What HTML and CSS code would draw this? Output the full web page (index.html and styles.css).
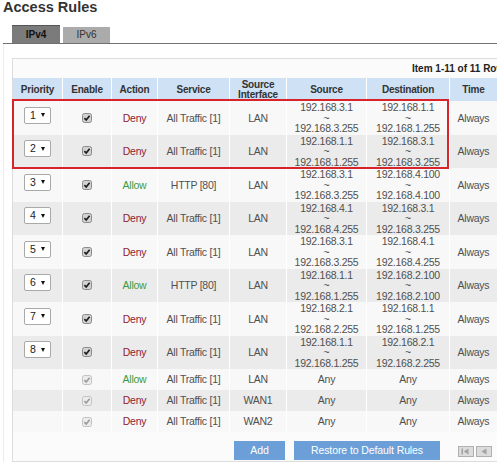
FILE: index.html
```html
<!DOCTYPE html>
<html>
<head>
<meta charset="utf-8">
<title>Access Rules</title>
<link rel="stylesheet" href="styles.css">
</head>
<body>
<div class="page">
  <h1 class="title">Access Rules</h1>
  <div class="tabs">
    <div class="tab tab-active">IPv4</div>
    <div class="tab">IPv6</div>
  </div>
  <div class="content">
    <div class="panel">
      <div class="info">Item 1-11 of 11 Rows per page</div>
      <table class="rules">
        <colgroup>
          <col class="c-pri"><col class="c-en"><col class="c-act"><col class="c-svc"><col class="c-if"><col class="c-src"><col class="c-dst"><col class="c-time"><col class="c-extra">
        </colgroup>
        <thead>
          <tr><th>Priority</th><th>Enable</th><th>Action</th><th>Service</th><th>Source<br>Interface</th><th>Source</th><th>Destination</th><th>Time</th><th></th></tr>
        </thead>
        <tbody>
          <tr class="multi"><td><span class="sel">1<i class="arr"></i></span></td><td><svg class="cb" width="10" height="10" viewBox="0 0 10 10"><rect x="0.5" y="0.5" width="9" height="9" rx="2"/><path d="M2.4 5.1 L4.2 7 L7.6 2.7"/></svg></td><td class="deny">Deny</td><td>All Traffic [1]</td><td>LAN</td><td>192.168.3.1<br>~<br>192.168.3.255</td><td>192.168.1.1<br>~<br>192.168.1.255</td><td>Always</td><td></td></tr>
          <tr class="multi"><td><span class="sel">2<i class="arr"></i></span></td><td><svg class="cb" width="10" height="10" viewBox="0 0 10 10"><rect x="0.5" y="0.5" width="9" height="9" rx="2"/><path d="M2.4 5.1 L4.2 7 L7.6 2.7"/></svg></td><td class="deny">Deny</td><td>All Traffic [1]</td><td>LAN</td><td>192.168.1.1<br>~<br>192.168.1.255</td><td>192.168.3.1<br>~<br>192.168.3.255</td><td>Always</td><td></td></tr>
          <tr class="multi"><td><span class="sel">3<i class="arr"></i></span></td><td><svg class="cb" width="10" height="10" viewBox="0 0 10 10"><rect x="0.5" y="0.5" width="9" height="9" rx="2"/><path d="M2.4 5.1 L4.2 7 L7.6 2.7"/></svg></td><td class="allow">Allow</td><td>HTTP [80]</td><td>LAN</td><td>192.168.3.1<br>~<br>192.168.3.255</td><td>192.168.4.100<br>~<br>192.168.4.100</td><td>Always</td><td></td></tr>
          <tr class="multi"><td><span class="sel">4<i class="arr"></i></span></td><td><svg class="cb" width="10" height="10" viewBox="0 0 10 10"><rect x="0.5" y="0.5" width="9" height="9" rx="2"/><path d="M2.4 5.1 L4.2 7 L7.6 2.7"/></svg></td><td class="deny">Deny</td><td>All Traffic [1]</td><td>LAN</td><td>192.168.4.1<br>~<br>192.168.4.255</td><td>192.168.3.1<br>~<br>192.168.3.255</td><td>Always</td><td></td></tr>
          <tr class="multi"><td><span class="sel">5<i class="arr"></i></span></td><td><svg class="cb" width="10" height="10" viewBox="0 0 10 10"><rect x="0.5" y="0.5" width="9" height="9" rx="2"/><path d="M2.4 5.1 L4.2 7 L7.6 2.7"/></svg></td><td class="deny">Deny</td><td>All Traffic [1]</td><td>LAN</td><td>192.168.3.1<br>~<br>192.168.3.255</td><td>192.168.4.1<br>~<br>192.168.4.255</td><td>Always</td><td></td></tr>
          <tr class="multi"><td><span class="sel">6<i class="arr"></i></span></td><td><svg class="cb" width="10" height="10" viewBox="0 0 10 10"><rect x="0.5" y="0.5" width="9" height="9" rx="2"/><path d="M2.4 5.1 L4.2 7 L7.6 2.7"/></svg></td><td class="allow">Allow</td><td>HTTP [80]</td><td>LAN</td><td>192.168.1.1<br>~<br>192.168.1.255</td><td>192.168.2.100<br>~<br>192.168.2.100</td><td>Always</td><td></td></tr>
          <tr class="multi"><td><span class="sel">7<i class="arr"></i></span></td><td><svg class="cb" width="10" height="10" viewBox="0 0 10 10"><rect x="0.5" y="0.5" width="9" height="9" rx="2"/><path d="M2.4 5.1 L4.2 7 L7.6 2.7"/></svg></td><td class="deny">Deny</td><td>All Traffic [1]</td><td>LAN</td><td>192.168.2.1<br>~<br>192.168.2.255</td><td>192.168.1.1<br>~<br>192.168.1.255</td><td>Always</td><td></td></tr>
          <tr class="multi"><td><span class="sel">8<i class="arr"></i></span></td><td><svg class="cb" width="10" height="10" viewBox="0 0 10 10"><rect x="0.5" y="0.5" width="9" height="9" rx="2"/><path d="M2.4 5.1 L4.2 7 L7.6 2.7"/></svg></td><td class="deny">Deny</td><td>All Traffic [1]</td><td>LAN</td><td>192.168.1.1<br>~<br>192.168.1.255</td><td>192.168.2.1<br>~<br>192.168.2.255</td><td>Always</td><td></td></tr>
          <tr class="single"><td></td><td><svg class="cb cb-off" width="10" height="10" viewBox="0 0 10 10"><rect x="0.5" y="0.5" width="9" height="9" rx="2"/><path d="M2.4 5.1 L4.2 7 L7.6 2.7"/></svg></td><td class="allow">Allow</td><td>All Traffic [1]</td><td>LAN</td><td>Any</td><td>Any</td><td>Always</td><td></td></tr>
          <tr class="single"><td></td><td><svg class="cb cb-off" width="10" height="10" viewBox="0 0 10 10"><rect x="0.5" y="0.5" width="9" height="9" rx="2"/><path d="M2.4 5.1 L4.2 7 L7.6 2.7"/></svg></td><td class="deny">Deny</td><td>All Traffic [1]</td><td>WAN1</td><td>Any</td><td>Any</td><td>Always</td><td></td></tr>
          <tr class="single"><td></td><td><svg class="cb cb-off" width="10" height="10" viewBox="0 0 10 10"><rect x="0.5" y="0.5" width="9" height="9" rx="2"/><path d="M2.4 5.1 L4.2 7 L7.6 2.7"/></svg></td><td class="deny">Deny</td><td>All Traffic [1]</td><td>WAN2</td><td>Any</td><td>Any</td><td>Always</td><td></td></tr>
        </tbody>
      </table>
      <div class="footer">
        <button class="btn btn-add">Add</button>
        <button class="btn btn-restore">Restore to Default Rules</button>
        <div class="pager">
          <svg class="pg" width="16" height="11" viewBox="0 0 16 11"><rect x="0.5" y="0.5" width="15" height="10"/><path class="glyph" d="M3.5 2.5 H5 V8.5 H3.5 Z M10.5 2.5 L5.8 5.5 L10.5 8.5 Z"/></svg>
          <svg class="pg" width="16" height="11" viewBox="0 0 16 11"><rect x="0.5" y="0.5" width="15" height="10"/><path class="glyph" d="M10.5 2.5 L5.5 5.5 L10.5 8.5 Z"/></svg>
        </div>
      </div>
      <div class="highlight"></div>
    </div>
  </div>
</div>
</body>
</html>
```
FILE: styles.css
```css
html, body {
  margin: 0;
  padding: 0;
  overflow: hidden;
  background: #fff;
}
body {
  font-family: "Liberation Sans", Arial, sans-serif;
  color: #4a4a4a;
}
.page {
  width: 497px;
  height: 465px;
  overflow: hidden;
}
.title {
  margin: 0;
  padding-left: 3px;
  height: 15px;
  font-size: 14.5px;
  line-height: 15px;
  font-weight: bold;
  color: #333;
  white-space: nowrap;
}
.tabs {
  display: flex;
  align-items: flex-end;
  gap: 3px;
  margin: 10px 0 0 3px;
  padding-left: 9px;
  border-bottom: 1px solid #707070;
}
.tab {
  width: 47px;
  height: 16px;
  background: #ababab;
  color: #333;
  font-size: 10px;
  line-height: 16px;
  text-align: center;
}
.tab-active {
  width: 48px;
  height: 17px;
  line-height: 17px;
  border-top: 1px solid #555;
  background: #7b7b7b;
  color: #111;
  font-weight: bold;
}
.content {
  margin-left: 3px;
  border-left: 1px solid #ececec;
  padding: 14px 0 0 8px;
}
.panel {
  position: relative;
  width: max-content;
  border: 1px solid #dcdcdc;
  background: #fbfbfb;
}
.info {
  height: 19px;
  line-height: 19px;
  padding-left: 399px;
  font-size: 10px;
  font-weight: bold;
  color: #222;
  white-space: nowrap;
}
.rules {
  border-collapse: separate;
  border-spacing: 0;
  table-layout: fixed;
  width: 547px;
}
.c-pri { width: 49px; }
.c-en { width: 49px; }
.c-act { width: 46px; }
.c-svc { width: 72px; }
.c-if { width: 57px; }
.c-src { width: 80px; }
.c-dst { width: 83px; }
.c-time { width: 48px; }
.c-extra { width: 63px; }
.rules th,
.rules td {
  padding: 0;
  text-align: center;
  vertical-align: middle;
  border-left: 1px solid #fff;
  white-space: nowrap;
  overflow: hidden;
}
.rules th:first-child,
.rules td:first-child {
  border-left: none;
}
.rules th {
  height: 23px;
  background: #cfe1f4;
  font-size: 10px;
  line-height: 10px;
  letter-spacing: -0.2px;
  font-weight: bold;
  color: #333;
}
.rules td {
  font-size: 10.5px;
  line-height: 10.5px;
  letter-spacing: -0.25px;
  color: #505050;
}
.rules tbody tr:nth-child(odd) td { background: #f8f8f8; }
.rules tbody tr:nth-child(even) td { background: #ebebeb; }
.rules tr.multi td { height: 33.5px; }
.rules tr.single td { height: 21px; }
.rules td.deny { color: #8e2232; }
.rules td.allow { color: #3f9b3f; }
.sel {
  display: flex;
  align-items: center;
  justify-content: space-between;
  box-sizing: border-box;
  width: 27px;
  height: 17px;
  margin: 0 auto 5px;
  padding: 0 5px 0 5px;
  border: 1px solid #a9a9a9;
  border-radius: 2px;
  background: #fff;
  color: #222;
  font-size: 10.5px;
  line-height: 15px;
}
.arr {
  display: block;
  width: 0;
  height: 0;
  border-left: 2.5px solid transparent;
  border-right: 2.5px solid transparent;
  border-top: 4px solid #111;
}
.cb {
  display: block;
  margin: 0 auto;
}
.cb rect {
  fill: #d2d2d2;
  stroke: #8a8a8a;
}
.cb path {
  fill: none;
  stroke: #1b1b1b;
  stroke-width: 1.6;
}
.cb-off rect {
  fill: #ececec;
  stroke: #c2c2c2;
}
.cb-off path {
  stroke: #9c9c9c;
}
.footer {
  display: flex;
  align-items: flex-start;
  height: 20px;
  padding: 9px 0 0 221px;
}
.btn {
  height: 19px;
  padding: 0;
  border: none;
  background: #6c9fd7;
  color: #fff;
  font-family: inherit;
  font-size: 10.5px;
  letter-spacing: -0.1px;
  line-height: 19px;
}
.btn-add { width: 51px; }
.btn-restore { width: 146px; margin-left: 9px; }
.pager {
  display: flex;
  gap: 2px;
  margin: 5px 0 0 18px;
}
.pg rect {
  fill: #dcdcdc;
  stroke: #b0b0b0;
}
.pg .glyph {
  fill: #a2a2a2;
}
.highlight {
  position: absolute;
  left: -1px;
  top: 40px;
  width: 437px;
  height: 70px;
  box-sizing: border-box;
  border: 2px solid #d8232a;
  pointer-events: none;
}
```
